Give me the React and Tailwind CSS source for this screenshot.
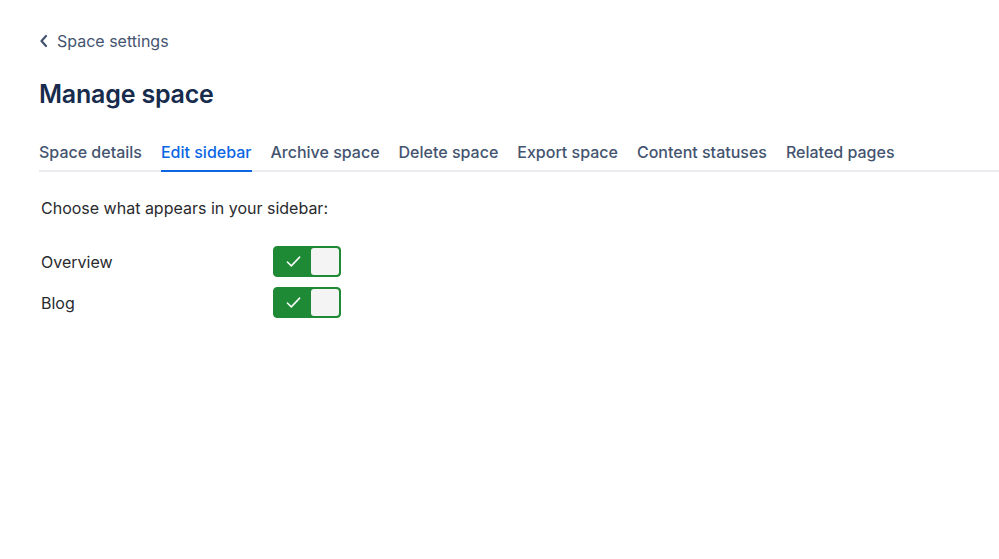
import { useState } from "react";

const tabs = [
  "Space details",
  "Edit sidebar",
  "Archive space",
  "Delete space",
  "Export space",
  "Content statuses",
  "Related pages",
];

function Toggle({ on, onChange }) {
  return (
    <button
      onClick={onChange}
      className={`flex h-[31px] w-[68px] items-center rounded-[4px] border p-[1px] ${
        on ? "border-[#1f8a35] bg-[#1f8a35]" : "border-[#8590a2] bg-[#8590a2]"
      }`}
    >
      {on ? (
        <>
          <span className="flex flex-1 items-center justify-center">
            <svg className="h-[21px] w-[21px]" viewBox="0 0 24 24" fill="none" stroke="white" strokeWidth={1.7} strokeLinecap="round" strokeLinejoin="round">
              <path d="M5 12.5l4.5 4.5L19 7" />
            </svg>
          </span>
          <span className="h-full w-[28px] rounded-[3px] bg-[#f4f4f4]" />
        </>
      ) : (
        <span className="h-full w-[28px] rounded-[3px] bg-[#f4f4f4]" />
      )}
    </button>
  );
}

export default function App() {
  const [active, setActive] = useState("Edit sidebar");
  const [items, setItems] = useState({ Overview: true, Blog: true });
  return (
    <div className="min-h-[559px] bg-white pl-[39px] pt-[30px] text-[#44546f]" style={{ fontFamily: "Inter, 'Noto Sans', sans-serif" }}>
      <div className="flex items-center gap-[8px] text-[16px] text-[#44546f]">
        <svg className="h-[14px] w-[10px]" viewBox="0 0 10 14" fill="none" stroke="#44546f" strokeWidth={2.2} strokeLinecap="round" strokeLinejoin="round">
          <path d="M7 2L2.5 7L7 12" />
        </svg>
        <span className="leading-[22px]">Space settings</span>
      </div>
      <h1 className="mt-[27px] text-[25px] font-semibold leading-[30px] tracking-[-0.2px] text-[#172b4d]">
        Manage space
      </h1>
      <div className="mt-[32px] flex gap-[19px] border-b-2 border-[#ebecf0]">
        {tabs.map((t) => (
          <button
            key={t}
            onClick={() => setActive(t)}
            className={`-mb-[2px] border-b-2 pb-[7px] text-[16px] font-medium leading-[22px] ${
              active === t ? "border-[#0c66e4] text-[#0c66e4]" : "border-transparent text-[#44546f]"
            }`}
          >
            {t}
          </button>
        ))}
      </div>
      <div className="pl-[2px] pt-[25px] text-[#292a2e]">
        <p className="text-[16px] leading-[22px]">Choose what appears in your sidebar:</p>
        <div className="mt-[27px] flex flex-col gap-[10px]">
          {Object.keys(items).map((k) => (
            <div key={k} className="flex items-center">
              <span className="w-[232px] text-[16px] leading-[22px]">{k}</span>
              <Toggle on={items[k]} onChange={() => setItems({ ...items, [k]: !items[k] })} />
            </div>
          ))}
        </div>
      </div>
    </div>
  );
}
